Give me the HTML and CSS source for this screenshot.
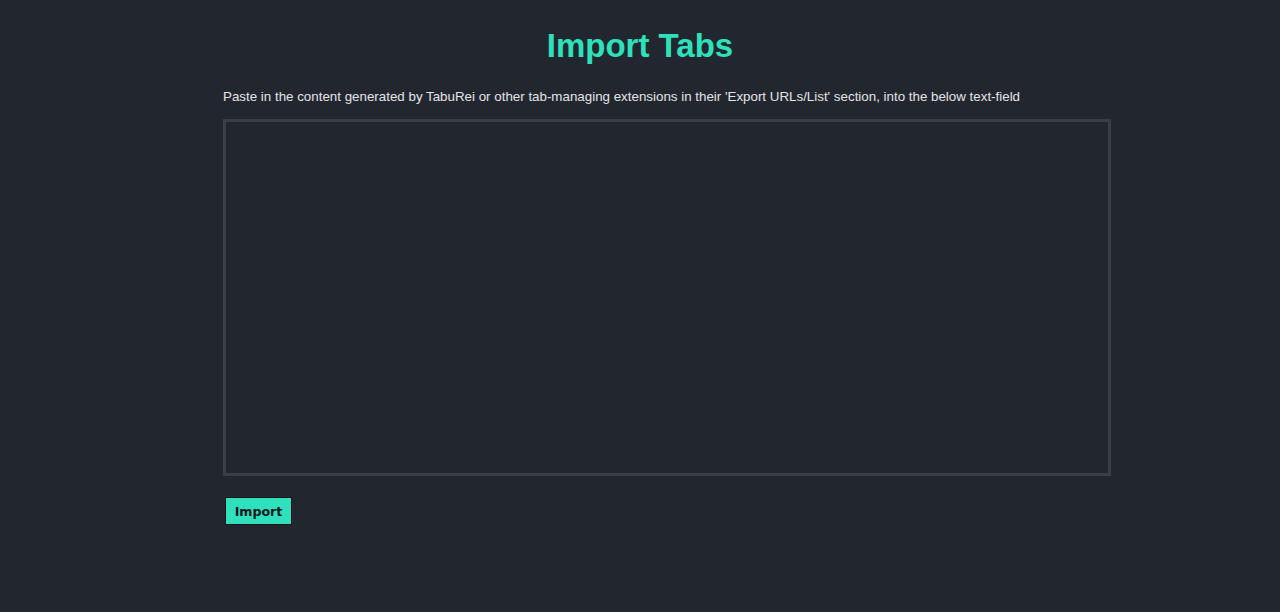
FILE: index.html
```html
<!DOCTYPE html>
<html>
<head>
<meta charset="utf-8">
<link rel="stylesheet" href="styles.css">
</head>
<body>
<main class="page">
  <h1 class="title">Import Tabs</h1>
  <p class="hint">Paste in the content generated by TabuRei or other tab-managing extensions in their 'Export URLs/List' section, into the below text-field</p>
  <textarea class="field"></textarea>
  <div class="actions">
    <button class="btn">Import</button>
  </div>
</main>
</body>
</html>
```
FILE: styles.css
```css
html, body {
  margin: 0;
  padding: 0;
  background: #22272f;
  height: 100%;
}
body {
  font-family: "Liberation Sans", Arial, sans-serif;
  color: #e6e6e6;
}
.page {
  padding-top: 27px;
}
.title {
  margin: 0;
  text-align: center;
  font-size: 33px;
  font-weight: bold;
  color: #2ee0bb;
  line-height: 37px;
}
.hint {
  margin: 25px 0 0 223px;
  font-size: 13.35px;
  line-height: 16px;
  color: #e2e4e6;
}
.field {
  display: block;
  box-sizing: border-box;
  margin: 14px 0 0 223px;
  width: 888px;
  height: 357px;
  background: #22272f;
  border: 3px solid #3a3f46;
  resize: none;
  outline: none;
  color: #e6e6e6;
}
.actions {
  margin: 21px 0 0 225px;
}
.btn {
  box-sizing: border-box;
  width: 67px;
  height: 28px;
  padding: 0;
  background: #2ee0bb;
  border: 1px solid #111418;
  color: #11161c;
  font-family: "DejaVu Sans", Verdana, sans-serif;
  font-size: 12.6px;
  font-weight: bold;
}
```
